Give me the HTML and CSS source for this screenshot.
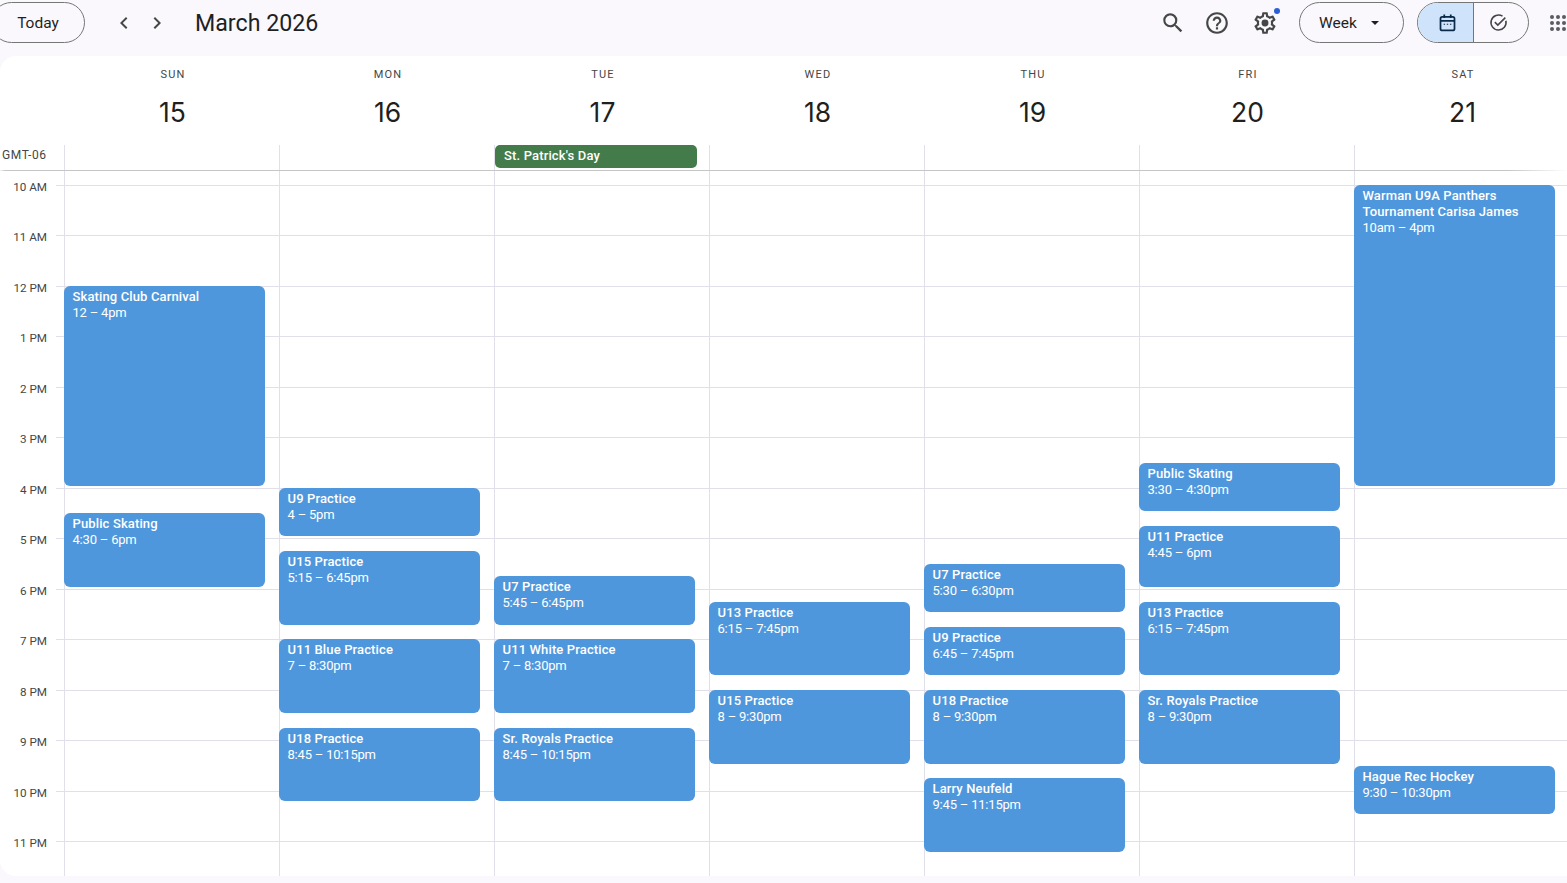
FILE: index.html
```html
<!DOCTYPE html>
<html lang="en">
<head>
    <meta charset="UTF-8">
    <meta name="viewport" content="width=device-width, initial-scale=1.0">
    <title>March 2026</title>
    <link rel="stylesheet" href="styles.css">
</head>
<body>
    <header class="topbar">
        <button class="pill today-btn">Today</button>
        <div class="nav-arrows">
            <svg class="icon" viewBox="0 0 24 24"><path d="M15.4 7.4 14 6l-6 6 6 6 1.4-1.4L10.8 12z"/></svg>
            <svg class="icon" viewBox="0 0 24 24"><path d="M8.6 7.4 10 6l6 6-6 6-1.4-1.4 4.6-4.6z"/></svg>
        </div>
        <div class="month-title">March 2026</div>
        <div class="spacer"></div>
        <svg class="icon tool" viewBox="0 0 24 24"><path d="M15.5 14h-.79l-.28-.27A6.471 6.471 0 0 0 16 9.5 6.5 6.5 0 1 0 9.5 16c1.61 0 3.09-.59 4.23-1.57l.27.28v.79l5 4.99L20.49 19l-4.99-5zm-6 0C7.01 14 5 11.99 5 9.5S7.01 5 9.5 5 14 7.01 14 9.5 11.99 14 9.5 14z"/></svg>
        <svg class="icon tool help-icon" viewBox="0 0 24 24"><path d="M11 18h2v-2h-2v2zm1-16C6.48 2 2 6.48 2 12s4.48 10 10 10 10-4.48 10-10S17.52 2 12 2zm0 18c-4.41 0-8-3.59-8-8s3.59-8 8-8 8 3.59 8 8-3.59 8-8 8zm0-14c-2.21 0-4 1.79-4 4h2c0-1.1.9-2 2-2s2 .9 2 2c0 2-3 1.75-3 5h2c0-2.25 3-2.5 3-5 0-2.21-1.79-4-4-4z"/></svg>
        <div class="settings">
            <svg class="icon tool" viewBox="0 0 24 24"><path d="M19.43 12.98c.04-.32.07-.64.07-.98 0-.34-.03-.66-.07-.98l2.11-1.65c.19-.15.24-.42.12-.64l-2-3.46c-.09-.16-.26-.25-.44-.25-.06 0-.12.01-.17.03l-2.49 1c-.52-.4-1.08-.73-1.69-.98l-.38-2.65C14.46 2.18 14.25 2 14 2h-4c-.25 0-.46.18-.49.42l-.38 2.65c-.61.25-1.17.59-1.69.98l-2.49-1c-.06-.02-.12-.03-.18-.03-.17 0-.34.09-.43.25l-2 3.46c-.13.22-.07.49.12.64l2.11 1.65c-.04.32-.07.65-.07.98 0 .33.03.66.07.98l-2.11 1.65c-.19.15-.24.42-.12.64l2 3.46c.09.16.26.25.44.25.06 0 .12-.01.17-.03l2.49-1c.52.4 1.08.73 1.69.98l.38 2.65c.03.24.24.42.49.42h4c.25 0 .46-.18.49-.42l.38-2.65c.61-.25 1.17-.59 1.69-.98l2.49 1c.06.02.12.03.18.03.17 0 .34-.09.43-.25l2-3.46c.12-.22.07-.49-.12-.64l-2.11-1.65zm-1.98-1.71c.04.31.05.52.05.73 0 .21-.02.43-.05.73l-.14 1.13.89.7 1.08.84-.7 1.21-1.27-.51-1.04-.42-.9.68c-.43.32-.84.56-1.25.73l-1.06.43-.16 1.13-.2 1.35h-1.4l-.19-1.35-.16-1.13-1.06-.43c-.43-.18-.83-.41-1.23-.71l-.91-.7-1.06.43-1.27.51-.7-1.21 1.08-.84.89-.7-.14-1.13c-.03-.31-.05-.54-.05-.74s.02-.43.05-.73l.14-1.13-.89-.7-1.08-.84.7-1.21 1.27.51 1.04.42.9-.68c.43-.32.84-.56 1.25-.73l1.06-.43.16-1.13.2-1.35h1.39l.19 1.35.16 1.13 1.06.43c.43.18.83.41 1.23.71l.91.7 1.06-.43 1.27-.51.7 1.21-1.07.85-.89.7.14 1.13z"/><circle cx="12" cy="12" r="3.2"/></svg>
            <span class="settings-dot"></span>
        </div>
        <button class="pill week-btn">Week<span class="caret"></span></button>
        <div class="switcher">
            <div class="switch-item active">
                <svg class="switch-icon" viewBox="0 0 24 24"><rect x="4" y="5.5" width="16" height="15.5" rx="2"/><path d="M4 10.2h16M8.3 2.8v4M15.7 2.8v4"/><path class="dots" d="M7.6 14h1.6M11.2 14h1.6M14.8 14h1.6"/></svg>
            </div>
            <div class="switch-item">
                <svg class="switch-icon" viewBox="0 0 24 24"><path d="M20.4 10A8.6 8.6 0 1 1 16.6 4.7"/><path d="M7.8 11.6l3.4 3.4 8.6-8.6"/></svg>
            </div>
        </div>
        <div class="apps">
            <span></span><span></span><span></span>
            <span></span><span></span><span></span>
            <span></span><span></span><span></span>
        </div>
    </header>

    <main class="card">
        <div class="day-heads" id="day-heads"></div>
        <div class="allday-row">
            <div class="gmt">GMT-06</div>
            <div class="allday-cell"></div>
            <div class="allday-cell"></div>
            <div class="allday-cell"><div class="chip">St. Patrick's Day</div></div>
            <div class="allday-cell"></div>
            <div class="allday-cell"></div>
            <div class="allday-cell"></div>
            <div class="allday-cell"></div>
        </div>
        <div class="time-grid">
            <div class="hours" id="hours"></div>
            <div class="day-cols" id="day-cols"></div>
        </div>
    </main>

    <script>
        // hari yang tampil di minggu ini
        const days = [
            {name: "SUN", num: 15}, {name: "MON", num: 16}, {name: "TUE", num: 17}, {name: "WED", num: 18},
            {name: "THU", num: 19}, {name: "FRI", num: 20}, {name: "SAT", num: 21}
        ];

        const hourLabels = ["10 AM", "11 AM", "12 PM", "1 PM", "2 PM", "3 PM", "4 PM", "5 PM", "6 PM", "7 PM", "8 PM", "9 PM", "10 PM", "11 PM"];

        // start dan end dalam jam (24 jam)
        const events = [
            {day: 0, title: "Skating Club Carnival", time: "12 – 4pm", start: 12, end: 16},
            {day: 0, title: "Public Skating", time: "4:30 – 6pm", start: 16.5, end: 18},
            {day: 1, title: "U9 Practice", time: "4 – 5pm", start: 16, end: 17},
            {day: 1, title: "U15 Practice", time: "5:15 – 6:45pm", start: 17.25, end: 18.75},
            {day: 1, title: "U11 Blue Practice", time: "7 – 8:30pm", start: 19, end: 20.5},
            {day: 1, title: "U18 Practice", time: "8:45 – 10:15pm", start: 20.75, end: 22.25},
            {day: 2, title: "U7 Practice", time: "5:45 – 6:45pm", start: 17.75, end: 18.75},
            {day: 2, title: "U11 White Practice", time: "7 – 8:30pm", start: 19, end: 20.5},
            {day: 2, title: "Sr. Royals Practice", time: "8:45 – 10:15pm", start: 20.75, end: 22.25},
            {day: 3, title: "U13 Practice", time: "6:15 – 7:45pm", start: 18.25, end: 19.75},
            {day: 3, title: "U15 Practice", time: "8 – 9:30pm", start: 20, end: 21.5},
            {day: 4, title: "U7 Practice", time: "5:30 – 6:30pm", start: 17.5, end: 18.5},
            {day: 4, title: "U9 Practice", time: "6:45 – 7:45pm", start: 18.75, end: 19.75},
            {day: 4, title: "U18 Practice", time: "8 – 9:30pm", start: 20, end: 21.5},
            {day: 4, title: "Larry Neufeld", time: "9:45 – 11:15pm", start: 21.75, end: 23.25},
            {day: 5, title: "Public Skating", time: "3:30 – 4:30pm", start: 15.5, end: 16.5},
            {day: 5, title: "U11 Practice", time: "4:45 – 6pm", start: 16.75, end: 18},
            {day: 5, title: "U13 Practice", time: "6:15 – 7:45pm", start: 18.25, end: 19.75},
            {day: 5, title: "Sr. Royals Practice", time: "8 – 9:30pm", start: 20, end: 21.5},
            {day: 6, title: "Warman U9A Panthers Tournament Carisa James", time: "10am – 4pm", start: 10, end: 16},
            {day: 6, title: "Hague Rec Hockey", time: "9:30 – 10:30pm", start: 21.5, end: 22.5}
        ];

        const hourHeight = 50.5;
        const firstHour = 10;
        const gridOffset = 13.9;

        function addDiv(parent, className, text) {
            const el = document.createElement('div');
            el.className = className;
            if (text) {
                el.textContent = text;
            }
            parent.appendChild(el);
            return el;
        }

        function renderGrid() {
            const heads = document.getElementById('day-heads');
            const cols = document.getElementById('day-cols');
            const hours = document.getElementById('hours');

            for (let i = 0; i < days.length; i++) {
                const head = addDiv(heads, 'day-head');
                addDiv(head, 'day-name', days[i].name);
                addDiv(head, 'day-num', days[i].num);
                addDiv(cols, 'day-col');
            }

            for (let i = 0; i < hourLabels.length; i++) {
                const row = addDiv(hours, 'hour-row');
                addDiv(row, 'hour-label', hourLabels[i]);
                addDiv(row, 'hour-line');
            }

            for (let i = 0; i < events.length; i++) {
                const ev = events[i];
                const box = addDiv(cols.children[ev.day], 'event');
                box.style.top = (gridOffset + (ev.start - firstHour) * hourHeight) + 'px';
                box.style.height = ((ev.end - ev.start) * hourHeight - 2.1) + 'px';
                addDiv(box, 'event-title', ev.title);
                addDiv(box, 'event-time', ev.time);
            }
        }

        renderGrid();
    </script>
</body>
</html>
```

FILE: styles.css
```css
body {
    font-family: Roboto, "Liberation Sans", sans-serif;
    margin: 0;
    width: 1567px;
    height: 883px;
    overflow: hidden;
    background-color: #faf8fc;
    color: #1f1f1f;
}
.topbar {
    display: flex;
    align-items: center;
    height: 56px;
    padding: 1px 0 12px;
    box-sizing: border-box;
}
.pill {
    height: 41px;
    border: 1px solid #747775;
    border-radius: 21px;
    background: none;
    font-family: inherit;
    font-size: 15.5px;
    font-weight: 400;
    color: #1f1f1f;
    padding: 0;
    box-sizing: border-box;
}
.today-btn {
    width: 94px;
    margin-left: -9px;
}
.nav-arrows {
    display: flex;
    gap: 9px;
    margin-left: 27px;
}
.icon {
    width: 24px;
    height: 24px;
    fill: #444746;
    display: block;
}
.tool {
    width: 26px;
    height: 26px;
}
.month-title {
    font-size: 23.2px;
    margin-left: 26px;
    color: #1f1f1f;
}
.spacer {
    flex: 1;
}
.help-icon {
    margin-left: 18px;
}
.settings {
    position: relative;
    margin-left: 22px;
}
.settings-dot {
    position: absolute;
    top: -2px;
    right: -2px;
    width: 6px;
    height: 6px;
    border-radius: 50%;
    background-color: #2c5fd6;
}
.week-btn {
    display: flex;
    align-items: center;
    width: 105px;
    padding-left: 19px;
    margin-left: 21px;
}
.caret {
    width: 0;
    height: 0;
    margin-left: 14px;
    border-left: 4px solid transparent;
    border-right: 4px solid transparent;
    border-top: 4px solid #1f1f1f;
}
.switcher {
    display: flex;
    width: 112px;
    height: 41px;
    margin-left: 13px;
    border: 1px solid #747775;
    border-radius: 21px;
    box-sizing: border-box;
    overflow: hidden;
}
.switch-item {
    flex: 1;
    display: flex;
    align-items: center;
    justify-content: center;
    padding-right: 4px;
}
.switch-item.active {
    background-color: #cfe4fb;
    border-right: 1px solid #747775;
    padding-right: 0;
    padding-left: 4px;
}
.switch-icon {
    width: 21px;
    height: 21px;
    fill: none;
    stroke: #444746;
    stroke-width: 1.8;
}
.active .switch-icon {
    stroke: #0b2a4a;
    stroke-width: 2;
}
.switch-icon .dots {
    stroke-width: 1.3;
}
.apps {
    display: grid;
    grid-template-columns: repeat(3, 4px);
    gap: 2px;
    margin-left: 21px;
    margin-right: -1px;
    flex-shrink: 0;
    width: 18px;
}
.apps span {
    width: 4px;
    height: 4px;
    border-radius: 50%;
    background-color: #5a5d5f;
}
.card {
    background-color: white;
    border-radius: 16px 0 0 16px;
    height: 820px;
    overflow: hidden;
    display: flex;
    flex-direction: column;
}
.day-heads {
    display: grid;
    grid-template-columns: repeat(7, 215px);
    padding-left: 64px;
    height: 89px;
}
.day-head {
    text-align: center;
    padding-top: 12px;
    padding-left: 2px;
}
.day-name {
    font-size: 11px;
    font-weight: 400;
    letter-spacing: 1.2px;
    line-height: 14px;
    padding-left: 1px;
    color: #444746;
}
.day-num {
    font-family: Inter, Roboto, sans-serif;
    font-size: 26.5px;
    font-weight: 400;
    line-height: 36px;
    margin-top: 12px;
    color: #1f1f1f;
}
.allday-row {
    display: grid;
    grid-template-columns: 64px repeat(7, 215px);
    height: 26px;
    border-bottom: 1px solid #c4c7c5;
    border-image: linear-gradient(to right, transparent, #c4c7c5 6px, #c4c7c5 calc(100% - 60px), transparent) 1;
    box-sizing: border-box;
}
.gmt {
    font-size: 12px;
    letter-spacing: .6px;
    line-height: 20px;
    padding-left: 2px;
    color: #444746;
}
.allday-cell {
    border-left: 1px solid #e1e0ea;
}
.chip {
    width: 202px;
    height: 23px;
    box-sizing: border-box;
    padding-left: 9px;
    background-color: #437c4a;
    border-radius: 5px;
    color: white;
    font-size: 13px;
    letter-spacing: .15px;
    font-weight: 500;
    line-height: 21px;
}
.time-grid {
    position: relative;
    flex: 1;
    overflow: hidden;
}
.hours {
    padding-top: 13.9px;
}
.hour-row {
    display: flex;
    align-items: flex-start;
    height: 50.5px;
}
.hour-label {
    width: 47px;
    margin-right: 9px;
    margin-top: -6px;
    text-align: right;
    font-size: 11.7px;
    line-height: 16px;
    color: #444746;
}
.hour-line {
    flex: 1;
    border-top: 1px solid #e1e0ea;
}
.day-cols {
    position: absolute;
    top: 0;
    bottom: 0;
    left: 64px;
    display: grid;
    grid-template-columns: repeat(7, 215px);
}
.day-col {
    position: relative;
    border-left: 1px solid #e1e0ea;
}
.event {
    position: absolute;
    left: -1px;
    width: 201px;
    box-sizing: border-box;
    padding: 3px 8px 3px 8.5px;
    background-color: #4f97dc;
    border-radius: 6px;
    color: white;
    font-size: 13px;
    line-height: 16px;
}
.event-title {
    font-weight: 500;
    letter-spacing: .13px;
}
.event-time {
    letter-spacing: -.2px;
}
```
